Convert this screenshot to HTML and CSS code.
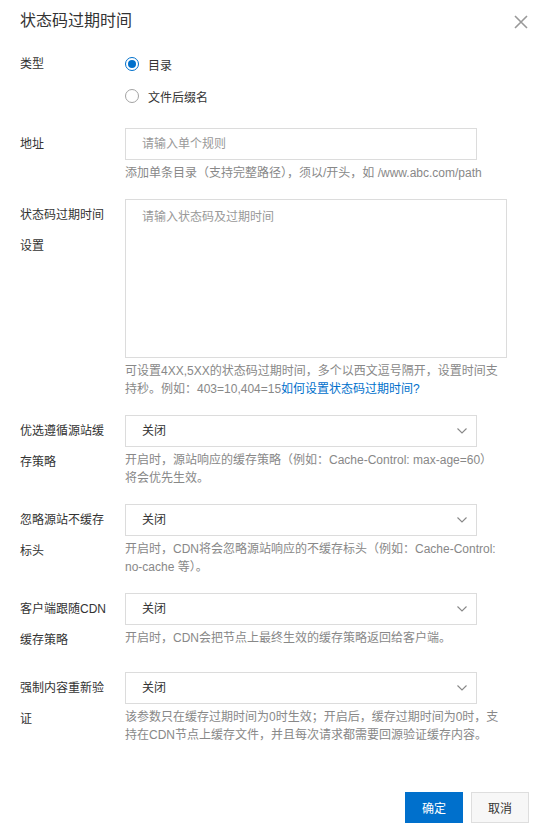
FILE: index.html
```html
<!DOCTYPE html>
<html lang="zh-CN">
<head>
<meta charset="utf-8">
<title>状态码过期时间</title>
<link rel="stylesheet" href="styles.css">
</head>
<body>
<div class="dialog">
  <div class="header">
    <div class="title">状态码过期时间</div>
    <svg class="close" width="14" height="14" viewBox="0 0 14 14"><path d="M1 1L13 13M13 1L1 13" stroke="#999" stroke-width="1.6" fill="none"/></svg>
  </div>
  <div class="form">
    <div class="row">
      <div class="label">类型</div>
      <div class="control">
        <div class="radio-line"><span class="radio checked"></span><span>目录</span></div>
        <div class="radio-line"><span class="radio"></span><span>文件后缀名</span></div>
      </div>
    </div>
    <div class="row">
      <div class="label">地址</div>
      <div class="control">
        <div class="input"><span class="ph">请输入单个规则</span></div>
        <div class="help">添加单条目录（支持完整路径），须以/开头，如 /www.abc.com/path</div>
      </div>
    </div>
    <div class="row">
      <div class="label">状态码过期时间设置</div>
      <div class="control">
        <div class="textarea"><span class="ph">请输入状态码及过期时间</span></div>
        <div class="help">可设置4XX,5XX的状态码过期时间，多个以西文逗号隔开，设置时间支持秒。例如：403=10,404=15<a class="link">如何设置状态码过期时间?</a></div>
      </div>
    </div>
    <div class="row">
      <div class="label">优选遵循源站缓存策略</div>
      <div class="control">
        <div class="select"><span>关闭</span><svg width="10" height="6" viewBox="0 0 10 6"><path d="M0.5 0.5L5 5L9.5 0.5" stroke="#888" stroke-width="1.1" fill="none"/></svg></div>
        <div class="help">开启时，源站响应的缓存策略（例如：Cache-Control: max-age=60）将会优先生效。</div>
      </div>
    </div>
    <div class="row">
      <div class="label">忽略源站不缓存标头</div>
      <div class="control">
        <div class="select"><span>关闭</span><svg width="10" height="6" viewBox="0 0 10 6"><path d="M0.5 0.5L5 5L9.5 0.5" stroke="#888" stroke-width="1.1" fill="none"/></svg></div>
        <div class="help">开启时，CDN将会忽略源站响应的不缓存标头（例如：Cache-Control: no-cache 等）。</div>
      </div>
    </div>
    <div class="row">
      <div class="label">客户端跟随CDN缓存策略</div>
      <div class="control">
        <div class="select"><span>关闭</span><svg width="10" height="6" viewBox="0 0 10 6"><path d="M0.5 0.5L5 5L9.5 0.5" stroke="#888" stroke-width="1.1" fill="none"/></svg></div>
        <div class="help">开启时，CDN会把节点上最终生效的缓存策略返回给客户端。</div>
      </div>
    </div>
    <div class="row">
      <div class="label">强制内容重新验证</div>
      <div class="control">
        <div class="select"><span>关闭</span><svg width="10" height="6" viewBox="0 0 10 6"><path d="M0.5 0.5L5 5L9.5 0.5" stroke="#888" stroke-width="1.1" fill="none"/></svg></div>
        <div class="help">该参数只在缓存过期时间为0时生效；开启后，缓存过期时间为0时，支持在CDN节点上缓存文件，并且每次请求都需要回源验证缓存内容。</div>
      </div>
    </div>
  </div>
  <div class="footer">
    <button class="btn primary">确定</button>
    <button class="btn">取消</button>
  </div>
</div>
</body>
</html>
```
FILE: styles.css
```css
* { box-sizing: border-box; }
html, body { margin: 0; padding: 0; background: #fff; }
body {
  font-family: "Liberation Sans", "Noto Sans CJK SC", sans-serif;
  font-size: 12px;
  color: #333;
  width: 548px;
}
.dialog { width: 548px; }
.header {
  display: flex;
  justify-content: space-between;
  align-items: center;
  padding: 9px 20px 15px 20px;
  height: 48px;
}
.title { font-size: 16px; line-height: 24px; color: #333; }
.close { display: block; margin-top: 2px; }
.form { padding: 0 0 0 20px; }
.row {
  display: grid;
  grid-template-columns: 90px 382px;
  column-gap: 15px;
  margin-bottom: 16px;
}
.label { line-height: 31px; padding-top: 1px; color: #333; }
.control { display: flex; flex-direction: column; }
.radio-line {
  display: flex;
  align-items: center;
  height: 32px;
  gap: 9px;
}
.radio {
  width: 14px;
  height: 14px;
  border-radius: 50%;
  border: 1px solid #a3a3a3;
  display: flex;
  align-items: center;
  justify-content: center;
  background: #fff;
}
.radio.checked { border-color: #0070cc; }
.radio.checked::after {
  content: "";
  width: 8px;
  height: 8px;
  border-radius: 50%;
  background: #0070cc;
}
.input, .select {
  width: 352px;
  height: 32px;
  border: 1px solid #dcdcdc;
  padding: 0 9px 0 16px;
  display: flex;
  align-items: center;
  justify-content: space-between;
  line-height: 30px;
}
.textarea {
  width: 382px;
  height: 159px;
  border: 1px solid #dcdcdc;
  padding: 8px 16px;
  line-height: 18px;
}
.ph { color: #999; }
.help {
  width: 376px;
  margin-top: 4px;
  line-height: 18.5px;
  color: #888;
}
.link { color: #0070cc; text-decoration: none; }
.footer {
  display: flex;
  justify-content: flex-end;
  gap: 8px;
  padding: 31px 19px 0 0;
}
.btn {
  width: 58px;
  height: 31px;
  font-family: inherit;
  font-size: 12px;
  border: 1px solid #dedede;
  background: #f7f7f7;
  color: #333;
  padding: 0;
}
.btn.primary { background: #0070cc; border-color: #0070cc; color: #fff; }
```
